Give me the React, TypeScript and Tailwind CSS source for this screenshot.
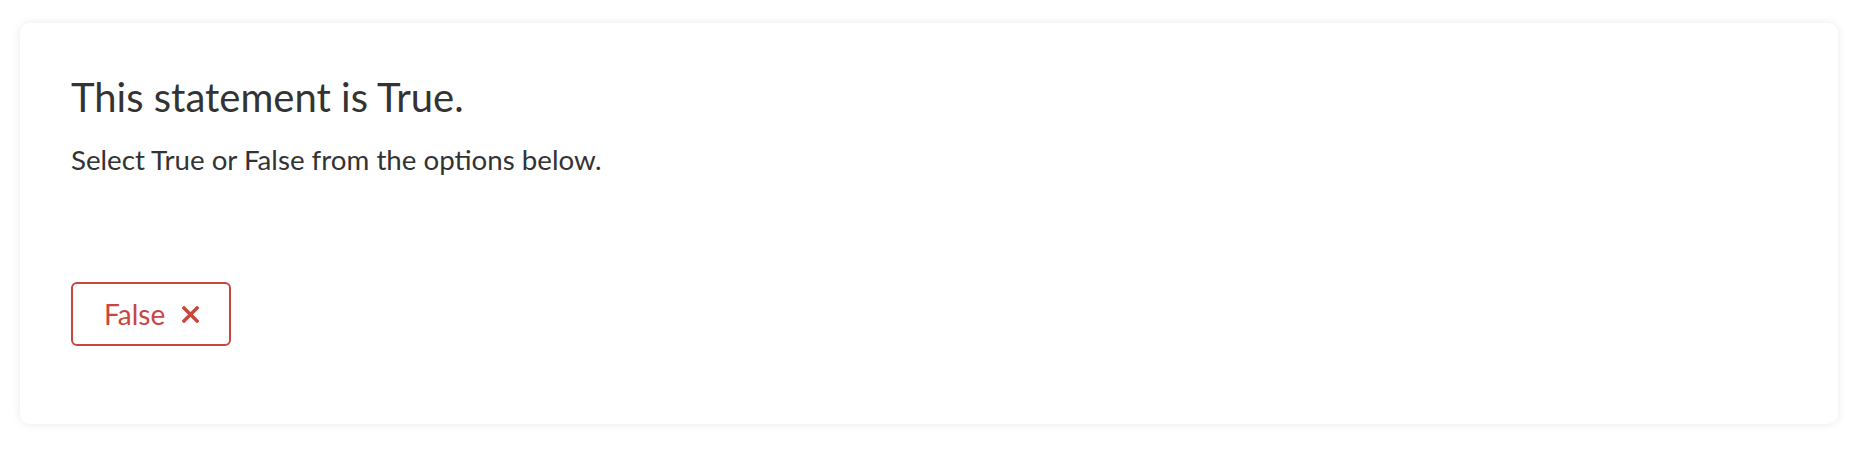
export default function App() {
  return (
    <div className="w-[1864px] h-[450px] bg-white pl-[20px] pr-[26px] pt-[23px] pb-[26px] font-['Lato',sans-serif]">
      <div className="h-full bg-white rounded-[10px] shadow-[0_0_10px_rgba(0,0,0,0.09)] px-[51px] pt-[50px]">
        <h2 className="text-[40px] leading-[48px] text-[#333333]">This statement is True.</h2>
        <p className="mt-[19px] text-[27.7px] leading-[39px] text-[#333333]">
          Select True or False from the options below.
        </p>

        <div className="mt-[103px] flex">
          <button className="h-[64px] pl-[31px] pr-[30px] flex items-center gap-[17px] border-2 border-[#c9463f] rounded-[6px] text-[#c9463f] text-[28px]">
            <span>False</span>
            <svg width="17" height="17" viewBox="0 0 17 17" fill="none">
              <path d="M2 2 L15 15 M15 2 L2 15" stroke="#c9463f" strokeWidth="3.4" strokeLinecap="square" />
            </svg>
          </button>
        </div>
      </div>
    </div>
  );
}
